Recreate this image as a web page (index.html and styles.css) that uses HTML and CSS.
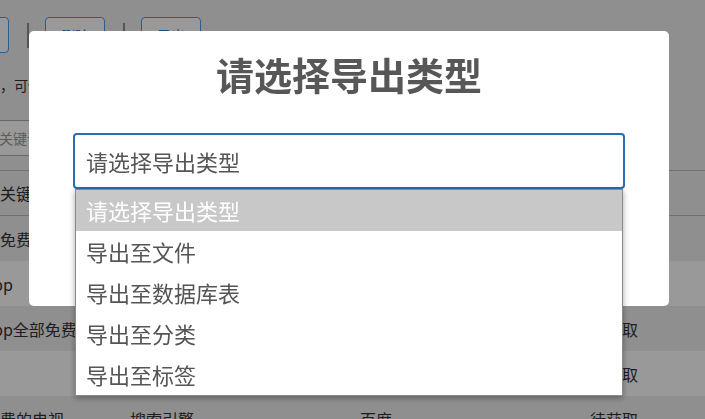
FILE: index.html
```html
<!DOCTYPE html>
<html lang="zh-CN">
<head>
  <meta charset="UTF-8" />
  <meta name="viewport" content="width=device-width, initial-scale=1.0"/>
  <title>关键词管理</title>
  <link rel="stylesheet" href="styles.css">
</head>
<body>
  <div class="page">
    <div class="toolbar">
      <button class="btn">添加</button>
      <span class="sep"></span>
      <button class="btn">删除</button>
      <span class="sep"></span>
      <button class="btn">导出</button>
    </div>

    <p class="tip">关键词，可使用逗号分隔多个关键词进行批量添加</p>

    <input class="search" type="text" placeholder="请输入关键词">

    <table class="list">
      <colgroup>
        <col class="c1"><col class="c2"><col class="c3"><col>
      </colgroup>
      <thead>
        <tr><th>待采集关键词</th><th>来源</th><th>搜索引擎</th><th>状态</th></tr>
      </thead>
      <tbody>
        <tr><td>电视剧免费</td><td>搜索引擎</td><td>百度</td><td>待获取</td></tr>
        <tr><td>电视app</td><td>搜索引擎</td><td>百度</td><td>待获取</td></tr>
        <tr><td>电视app全部免费</td><td>搜索引擎</td><td>百度</td><td>待获取</td></tr>
        <tr><td>看电视</td><td>搜索引擎</td><td>百度</td><td>待获取</td></tr>
        <tr><td>全部免费的电视</td><td>搜索引擎</td><td>百度</td><td>待获取</td></tr>
      </tbody>
    </table>
  </div>

  <div class="overlay">
    <div class="modal">
      <h2 class="modal-title">请选择导出类型</h2>
      <div class="picker">
        <div class="picker-box">请选择导出类型</div>
        <ul class="picker-list">
          <li class="active">请选择导出类型</li>
          <li>导出至文件</li>
          <li>导出至数据库表</li>
          <li>导出至分类</li>
          <li>导出至标签</li>
        </ul>
      </div>
      <div class="modal-actions">
        <button class="btn-ok">确定</button>
        <button class="btn-cancel">取消</button>
      </div>
    </div>
  </div>
</body>
</html>
```

FILE: styles.css
```css
html, body { margin: 0; height: 100%; overflow: hidden; }
body {
  background: #eee; color: #333;
  font-family: "Noto Sans CJK SC", "Noto Sans", sans-serif;
}

/* page behind the dialog, scrolled a bit to the right */
.page { width: 820px; margin-left: -56px; }

.toolbar { display: flex; align-items: center; padding: 17px 0 0 5px; }
.btn {
  width: 60px; height: 36px; padding: 0;
  background: #fff; color: #2d7ed6; font: 14px "Noto Sans CJK SC", sans-serif;
  border: 1px solid #4a9cf0; border-radius: 4px;
}
.sep { width: 2px; height: 25px; margin: 0 16px 0 18px; background: #8e8e8e; }

.tip { margin: 22px 0 0; padding-left: 14px; font-size: 14px; line-height: 20px; }

.search {
  display: block; box-sizing: border-box; width: 300px; height: 36px;
  margin-top: 25px; padding: 0 12px;
  border: 1px solid #aaa; border-radius: 3px;
  font: 14px "Noto Sans CJK SC", sans-serif; color: #333;
}
.search::placeholder { color: #999; }

.list { margin-top: 14px; width: 820px; border-collapse: collapse; table-layout: fixed; font-size: 16px; }
.list .c1 { width: 178px; }
.list .c2, .list .c3 { width: 230px; }
.list th, .list td { padding: 0 8px; height: 45px; text-align: left; white-space: nowrap; overflow: hidden; }
.list th { font-weight: normal; border-top: 1px solid #bbb; border-bottom: 1px solid #bbb; height: 44px; }
.list tbody tr:nth-child(even) { background: #fff; }

/* dialog */
.overlay {
  position: fixed; inset: 0;
  background: rgba(0, 0, 0, 0.4);
  display: flex; align-items: flex-start;
  padding: 31px 0 0 29px;
}
.modal {
  width: 640px; box-sizing: border-box;
  padding: 21px 44px 43px;
  background: #fff; border-radius: 5px;
}
.modal-title {
  margin: 0; text-align: center;
  font-size: 38px; line-height: 44px; font-weight: bold; color: #575757;
}

.picker { position: relative; margin-top: 37px; }
.picker-box {
  box-sizing: border-box; height: 56px; padding: 0 11px;
  border: 2px solid #2a6cb5; border-radius: 4px;
  font-size: 22px; line-height: 52px; color: #555;
}
.picker-list {
  position: absolute; top: 100%; left: 2px; right: 2px; z-index: 2;
  margin: 0; padding: 0; list-style: none;
  background: #fff; border: 1px solid #8a8a8a;
  box-shadow: 0 2px 6px rgba(0, 0, 0, 0.35);
}
.picker-list li { height: 41px; padding: 0 10px; font-size: 22px; line-height: 41px; color: #555; }
.picker-list li.active { background: #c8c8c8; color: #fff; }

.modal-actions { display: flex; justify-content: center; gap: 12px; margin-top: 30px; }
.modal-actions button {
  height: 44px; padding: 0 28px; border: none; border-radius: 5px;
  font: 17px "Noto Sans CJK SC", sans-serif; color: #fff;
}
.btn-ok { background: #8cd4f5; }
.btn-cancel { background: #c1c1c1; }
```
